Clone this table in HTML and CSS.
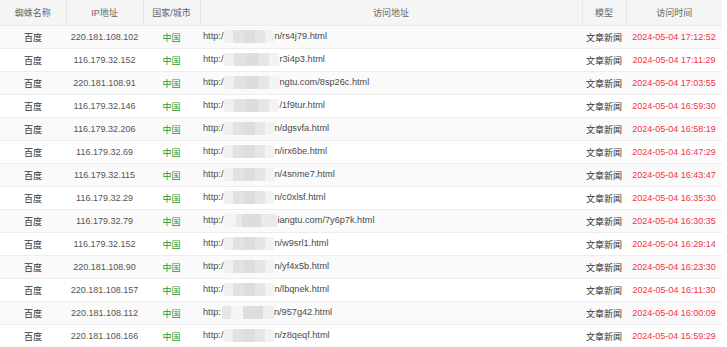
FILE: index.html
```html
<!DOCTYPE html>
<html lang="zh">
<head>
<meta charset="utf-8">
<title>蜘蛛访问记录</title>
<link rel="stylesheet" href="styles.css">
</head>
<body>
<table class="log">
  <colgroup>
    <col class="c-name"><col class="c-ip"><col class="c-geo"><col class="c-url"><col class="c-model"><col class="c-time">
  </colgroup>
  <thead>
    <tr><th>蜘蛛名称</th><th>IP地址</th><th>国家/城市</th><th>访问地址</th><th>模型</th><th>访问时间</th></tr>
  </thead>
  <tbody>
    <tr><td>百度</td><td class="ip">220.181.108.102</td><td class="geo">中国</td><td class="url">http:/<span class="blur"></span>n/rs4j79.html</td><td>文章新闻</td><td class="time">2024-05-04 17:12:52</td></tr>
    <tr><td>百度</td><td class="ip">116.179.32.152</td><td class="geo">中国</td><td class="url">http:/<span class="blur b2"></span>r3i4p3.html</td><td>文章新闻</td><td class="time">2024-05-04 17:11:29</td></tr>
    <tr><td>百度</td><td class="ip">220.181.108.91</td><td class="geo">中国</td><td class="url">http:/<span class="blur b2"></span>ngtu.com/8sp26c.html</td><td>文章新闻</td><td class="time">2024-05-04 17:03:55</td></tr>
    <tr><td>百度</td><td class="ip">116.179.32.146</td><td class="geo">中国</td><td class="url">http:/<span class="blur b2"></span>/1f9tur.html</td><td>文章新闻</td><td class="time">2024-05-04 16:59:30</td></tr>
    <tr><td>百度</td><td class="ip">116.179.32.206</td><td class="geo">中国</td><td class="url">http:/<span class="blur"></span>n/dgsvfa.html</td><td>文章新闻</td><td class="time">2024-05-04 16:58:19</td></tr>
    <tr><td>百度</td><td class="ip">116.179.32.69</td><td class="geo">中国</td><td class="url">http:/<span class="blur"></span>n/irx6be.html</td><td>文章新闻</td><td class="time">2024-05-04 16:47:29</td></tr>
    <tr><td>百度</td><td class="ip">116.179.32.115</td><td class="geo">中国</td><td class="url">http:/<span class="blur"></span>n/4snme7.html</td><td>文章新闻</td><td class="time">2024-05-04 16:43:47</td></tr>
    <tr><td>百度</td><td class="ip">116.179.32.29</td><td class="geo">中国</td><td class="url">http:/<span class="blur"></span>n/c0xlsf.html</td><td>文章新闻</td><td class="time">2024-05-04 16:35:30</td></tr>
    <tr><td>百度</td><td class="ip">116.179.32.79</td><td class="geo">中国</td><td class="url">http:/<span class="blur b3"></span>iangtu.com/7y6p7k.html</td><td>文章新闻</td><td class="time">2024-05-04 16:30:35</td></tr>
    <tr><td>百度</td><td class="ip">116.179.32.152</td><td class="geo">中国</td><td class="url">http:/<span class="blur"></span>n/w9srl1.html</td><td>文章新闻</td><td class="time">2024-05-04 16:29:14</td></tr>
    <tr><td>百度</td><td class="ip">220.181.108.90</td><td class="geo">中国</td><td class="url">http:/<span class="blur"></span>n/yf4x5b.html</td><td>文章新闻</td><td class="time">2024-05-04 16:23:30</td></tr>
    <tr><td>百度</td><td class="ip">220.181.108.157</td><td class="geo">中国</td><td class="url">http:/<span class="blur"></span>n/lbqnek.html</td><td>文章新闻</td><td class="time">2024-05-04 16:11:30</td></tr>
    <tr><td>百度</td><td class="ip">220.181.108.112</td><td class="geo">中国</td><td class="url">http:<span class="blur b4"></span>n/957g42.html</td><td>文章新闻</td><td class="time">2024-05-04 16:00:09</td></tr>
    <tr><td>百度</td><td class="ip">220.181.108.166</td><td class="geo">中国</td><td class="url">http:/<span class="blur"></span>n/z8qeqf.html</td><td>文章新闻</td><td class="time">2024-05-04 15:59:29</td></tr>
  </tbody>
</table>
</body>
</html>
```

FILE: styles.css
```css
html, body {
  margin: 0;
  padding: 0;
  background: #ffffff;
}

.log {
  width: 722px;
  border-collapse: collapse;
  table-layout: fixed;
  font-family: "Liberation Sans", "Noto Sans CJK SC", sans-serif;
  font-size: 9px;
  color: #333333;
}

.c-name { width: 66px; }
.c-ip { width: 77px; }
.c-geo { width: 57px; }
.c-url { width: 382px; }
.c-model { width: 44px; }
.c-time { width: 96px; }

.log th {
  height: 25px;
  padding: 0;
  background: #f5f5f5;
  color: #666666;
  font-weight: normal;
  text-align: center;
  border-right: 1px solid #e6e6e6;
  border-bottom: 1px solid #ececec;
}

.log th:last-child {
  border-right: none;
}

.log td {
  height: 22px;
  padding: 0;
  text-align: center;
  border-bottom: 1px solid #ededed;
  white-space: nowrap;
  overflow: hidden;
}

.log tbody tr:nth-child(odd) td {
  background: #fafafa;
}

.log td.ip {
  color: #555555;
}

.log td.geo {
  color: #1f9a22;
}

.log td.url {
  text-align: left;
  padding-left: 3px;
  color: #4a4a4a;
  font-size: 9.2px;
}

.log td.time {
  color: #f5333f;
}

.blur {
  display: inline-block;
  vertical-align: middle;
  width: 50px;
  height: 13px;
  margin: -2px 0 0 1px;
  background: linear-gradient(90deg,
    #f0f0f0 0 18%,
    #e2e2e2 18% 40%,
    #dddddd 40% 62%,
    #e6e6e6 62% 82%,
    #f3f3f3 82% 100%);
}

.blur.b2 {
  width: 55px;
}

.blur.b3 {
  width: 53px;
  background: linear-gradient(90deg,
    #f4f4f4 0 22%,
    #e8e8e8 22% 34%,
    #dddddd 34% 70%,
    #eaeaea 70% 100%);
}

.blur.b4 {
  width: 52px;
  background: linear-gradient(90deg,
    #e6e6e6 0 18%,
    #f5f5f5 18% 40%,
    #dddddd 40% 78%,
    #eeeeee 78% 100%);
}
```
